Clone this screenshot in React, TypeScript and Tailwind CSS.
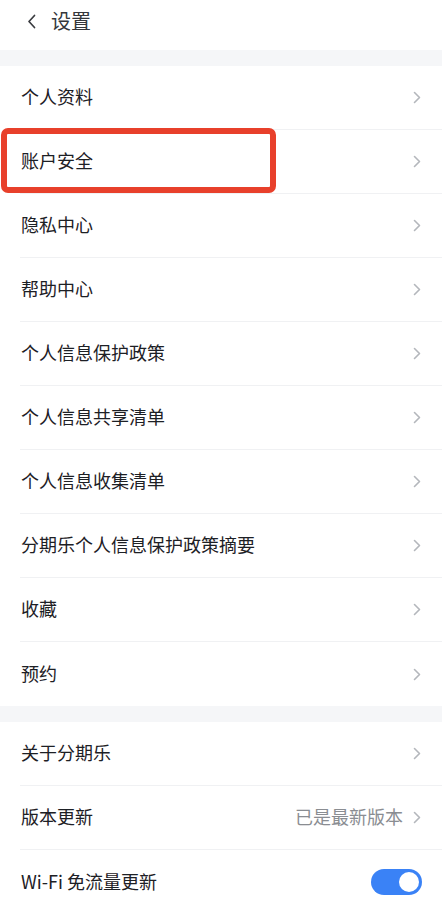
import React from "react";

const Chevron = () => (
  <svg width="8" height="13" viewBox="0 0 8 13" fill="none" className="shrink-0">
    <path d="M1.5 1.5 L6.5 6.5 L1.5 11.5" stroke="#b4b7bc" strokeWidth="1.6" strokeLinecap="round" strokeLinejoin="round" />
  </svg>
);

type RowProps = { label: string; last?: boolean; right?: React.ReactNode; highlight?: boolean; noChevron?: boolean };

const Row = ({ label, last, right, highlight, noChevron }: RowProps) => (
  <div className="relative h-16 bg-white pl-5">
    <div className={`flex h-full items-center pr-[21px] ${last ? "" : "border-b border-[#f0f1f3]"}`}>
      <span className="flex-1 -translate-y-px pl-px text-[18px] text-[#1d2025]">{label}</span>
      {right}
      {!noChevron && <Chevron />}
    </div>
    {highlight && (
      <div className="absolute left-px top-[-2px] h-[65px] w-[275px] rounded-[7px] border-[6px] border-[#e8402b]" />
    )}
  </div>
);

export default function App() {
  const group1 = [
    "个人资料",
    "账户安全",
    "隐私中心",
    "帮助中心",
    "个人信息保护政策",
    "个人信息共享清单",
    "个人信息收集清单",
    "分期乐个人信息保护政策摘要",
    "收藏",
    "预约",
  ];
  return (
    <div
      className="h-[904px] w-[442px] overflow-hidden bg-white"
      style={{ fontFamily: '"Noto Sans CJK SC", "Noto Sans", sans-serif' }}
    >
      <div className="flex h-[50px] items-center bg-white pb-2 pl-[27px]">
        <svg width="9" height="15" viewBox="0 0 9 15" fill="none">
          <path d="M7.5 1.5 L2 7.5 L7.5 13.5" stroke="#3a3c40" strokeWidth="1.7" strokeLinecap="round" strokeLinejoin="round" />
        </svg>
        <span className="ml-[15px] text-[20px] text-[#35373b]">设置</span>
      </div>
      <div className="h-4 bg-[#f5f6f8]" />
      {group1.map((l, i) => (
        <Row key={l} label={l} last={i === group1.length - 1} highlight={i === 1} />
      ))}
      <div className="h-4 bg-[#f5f6f8]" />
      <Row label="关于分期乐" />
      <Row
        label="版本更新"
        right={<span className="mr-[10px] -translate-y-px text-[18px] text-[#8a8d92]">已是最新版本</span>}
      />
      <Row
        label="Wi-Fi 免流量更新"
        last
        noChevron
        right={
          <div className="mr-[-1px] flex h-[26px] w-[51px] items-center justify-end rounded-full bg-[#3a82f6] pr-[3px]">
            <div className="h-[20px] w-[20px] rounded-full bg-white" />
          </div>
        }
      />
    </div>
  );
}
